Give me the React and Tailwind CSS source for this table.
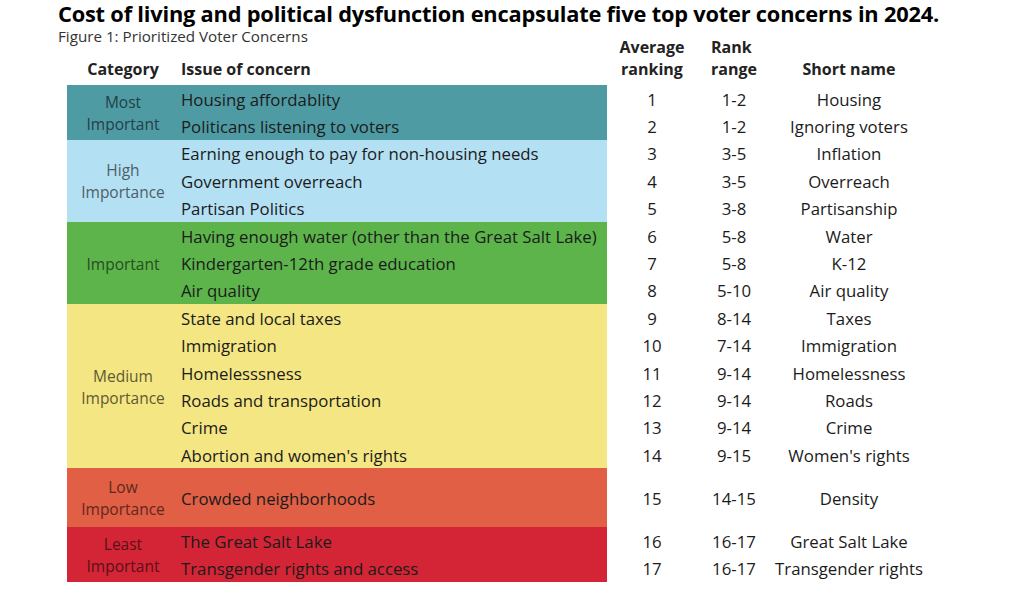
const groups = [
  {
    label: ["Most", "Important"],
    bg: "bg-[#4f9ba4]",
    fg: "text-[#233f44]",
    rows: [
      ["Housing affordablity", "1", "1-2", "Housing"],
      ["Politicans listening to voters", "2", "1-2", "Ignoring voters"],
    ],
  },
  {
    label: ["High", "Importance"],
    bg: "bg-[#b4e0f4]",
    fg: "text-[#4d5f66]",
    rows: [
      ["Earning enough to pay for non-housing needs", "3", "3-5", "Inflation"],
      ["Government overreach", "4", "3-5", "Overreach"],
      ["Partisan Politics", "5", "3-8", "Partisanship"],
    ],
  },
  {
    label: ["Important"],
    bg: "bg-[#5cb44b]",
    fg: "text-[#274d20]",
    rows: [
      ["Having enough water (other than the Great Salt Lake)", "6", "5-8", "Water"],
      ["Kindergarten-12th grade education", "7", "5-8", "K-12"],
      ["Air quality", "8", "5-10", "Air quality"],
    ],
  },
  {
    label: ["Medium", "Importance"],
    bg: "bg-[#f4e682]",
    fg: "text-[#5f5a35]",
    rows: [
      ["State and local taxes", "9", "8-14", "Taxes"],
      ["Immigration", "10", "7-14", "Immigration"],
      ["Homelesssness", "11", "9-14", "Homelessness"],
      ["Roads and transportation", "12", "9-14", "Roads"],
      ["Crime", "13", "9-14", "Crime"],
      ["Abortion and women's rights", "14", "9-15", "Women's rights"],
    ],
  },
  {
    label: ["Low", "Importance"],
    bg: "bg-[#e05f45]",
    fg: "text-[#5e281d]",
    tall: true,
    rows: [["Crowded neighborhoods", "15", "14-15", "Density"]],
  },
  {
    label: ["Least", "Important"],
    bg: "bg-[#d42536]",
    fg: "text-[#5a1017]",
    rows: [
      ["The Great Salt Lake", "16", "16-17", "Great Salt Lake"],
      ["Transgender rights and access", "17", "16-17", "Transgender rights"],
    ],
  },
];

function Group({ group }) {
  const rowH = group.tall ? "h-[58.6px]" : "h-[27.4px]";
  return (
    <div className="flex">
      <div className={`flex w-[540px] ${group.bg}`}>
        <div
          className={`flex w-[112px] flex-col items-center justify-center pt-[1px] text-[15.5px] leading-[22px] ${group.fg}`}
        >
          {group.label.map((l) => (
            <span key={l}>{l}</span>
          ))}
        </div>
        <div className="flex flex-col">
          {group.rows.map((r) => (
            <div key={r[0]} className={`flex items-center pl-[2px] pt-[1px] ${rowH} text-[#1b1b1b]`}>
              {r[0]}
            </div>
          ))}
        </div>
      </div>
      <div className="flex flex-col">
        {group.rows.map((r) => (
          <div key={r[0]} className={`flex items-center pt-[1px] ${rowH}`}>
            <div className="w-[90px] text-center">{r[1]}</div>
            <div className="w-[74px] text-center">{r[2]}</div>
            <div className="w-[156px] text-center">{r[3]}</div>
          </div>
        ))}
      </div>
    </div>
  );
}

export default function App() {
  return (
    <div className="min-h-screen bg-white pl-[58px] text-[16.8px] text-[#1b1b1b] font-['Open_Sans',sans-serif]">
      <h1 className="h-[27px] text-[21.8px] font-bold leading-[27px] tracking-[-0.2px] text-black">
        Cost of living and political dysfunction encapsulate five top voter concerns in 2024.
      </h1>
      <div className="flex">
        <div className="flex h-[53px] w-[549px] flex-col justify-between">
          <div className="text-[15.2px] leading-[18px] text-[#333]">Figure 1: Prioritized Voter Concerns</div>
          <div className="flex pl-[9px] text-[16px] font-bold leading-[22px] text-[#222]">
            <div className="w-[112px] text-center">Category</div>
            <div className="pl-[2px]">Issue of concern</div>
          </div>
        </div>
        <div className="flex pt-[9px] text-[16px] font-bold leading-[22px] text-[#222]">
          <div className="w-[90px] text-center">
            Average
            <br />
            ranking
          </div>
          <div className="w-[74px] pl-[14px]">
            Rank
            <br />
            range
          </div>
          <div className="flex w-[156px] items-end justify-center">Short name</div>
        </div>
      </div>
      <div className="mt-[5px] ml-[9px] flex flex-col">
        {groups.map((g) => (
          <Group key={g.label.join(" ")} group={g} />
        ))}
      </div>
    </div>
  );
}
